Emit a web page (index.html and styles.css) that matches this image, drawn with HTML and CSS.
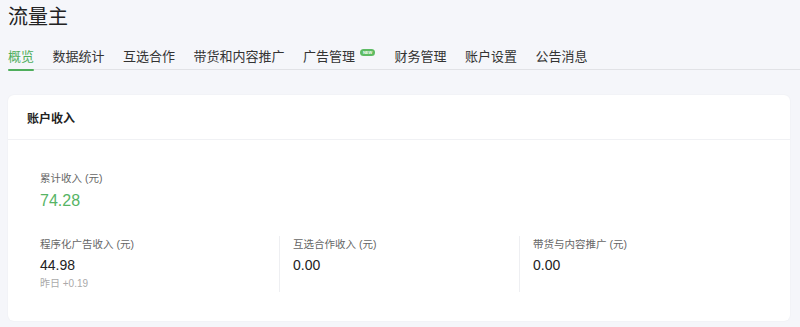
FILE: index.html
```html
<!DOCTYPE html>
<html lang="zh-CN">
<head>
<meta charset="utf-8">
<title>流量主</title>
<link rel="stylesheet" href="styles.css">
</head>
<body>
<div class="page">
  <h1 class="title">流量主</h1>
  <nav class="tabs">
    <a class="tab active">概览</a>
    <a class="tab">数据统计</a>
    <a class="tab">互选合作</a>
    <a class="tab">带货和内容推广</a>
    <a class="tab">广告管理<span class="badge">NEW</span></a>
    <a class="tab">财务管理</a>
    <a class="tab">账户设置</a>
    <a class="tab">公告消息</a>
  </nav>
  <section class="card">
    <div class="card-head">账户收入</div>
    <div class="card-body">
      <div class="total">
        <div class="label">累计收入 (元)</div>
        <div class="total-value">74.28</div>
      </div>
      <div class="stats">
        <div class="stat">
          <div class="label">程序化广告收入 (元)</div>
          <div class="value">44.98</div>
          <div class="sub">昨日 +0.19</div>
        </div>
        <div class="stat">
          <div class="label">互选合作收入 (元)</div>
          <div class="value">0.00</div>
        </div>
        <div class="stat">
          <div class="label">带货与内容推广 (元)</div>
          <div class="value">0.00</div>
        </div>
      </div>
    </div>
  </section>
</div>
</body>
</html>
```

FILE: styles.css
```css
* { box-sizing: border-box; }
html, body {
  margin: 0;
  padding: 0;
  background: #f5f6fa;
  font-family: "Liberation Sans", "Noto Sans CJK SC", sans-serif;
  color: #222;
}
.page {
  padding-left: 8px;
  width: 800px;
  height: 327px;
  overflow: hidden;
}
.title {
  margin: 0;
  padding-top: 3px;
  font-size: 20px;
  line-height: 28px;
  font-weight: 400;
  color: #222;
}
.tabs {
  display: flex;
  gap: 18.5px;
  margin-top: 10px;
  border-bottom: 1px solid #e1e2e6;
  height: 29px;
}
.tab {
  display: flex;
  align-items: center;
  height: 29px;
  font-size: 13px;
  color: #333;
  position: relative;
  padding-bottom: 1px;
}
.tab.active {
  color: #4fae5c;
}
.tab.active::after {
  content: "";
  position: absolute;
  left: 0;
  right: 0;
  bottom: -1px;
  height: 2px;
  background: #4fae5c;
  border-radius: 1px;
}
.badge {
  display: inline-block;
  margin-left: 5px;
  margin-right: 1px;
  margin-top: -5px;
  width: 15px;
  height: 7px;
  border-radius: 4px;
  background: #5dbb63;
  color: #fff;
  font-size: 4px;
  line-height: 7px;
  text-align: center;
  font-weight: 700;
}
.card {
  margin-top: 25px;
  width: 782px;
  height: 226px;
  background: #fff;
  border-radius: 6px;
  box-shadow: 0 0 2px rgba(0, 0, 0, 0.05);
}
.card-head {
  height: 45px;
  border-bottom: 1px solid #f0f1f4;
  padding-left: 19px;
  display: flex;
  align-items: center;
  font-size: 12px;
  font-weight: 700;
  color: #222;
}
.card-body {
  padding: 30px 0 0 32px;
}
.label {
  font-size: 10.5px;
  line-height: 16px;
  color: #666;
}
.total-value {
  font-size: 16px;
  line-height: 22px;
  color: #56b465;
  margin-top: 4px;
}
.stats {
  display: flex;
  margin-top: 24px;
}
.stat {
  flex: 0 0 240px;
  height: 56px;
  padding-left: 13px;
  border-left: 1px solid #eeeff2;
}
.stat:first-child {
  flex-basis: 239px;
  padding-left: 0;
  border-left: none;
}
.value {
  font-size: 14px;
  line-height: 20px;
  color: #222;
  margin-top: 3px;
}
.sub {
  font-size: 10px;
  line-height: 16px;
  color: #aaa;
  margin-top: 1px;
}
```
